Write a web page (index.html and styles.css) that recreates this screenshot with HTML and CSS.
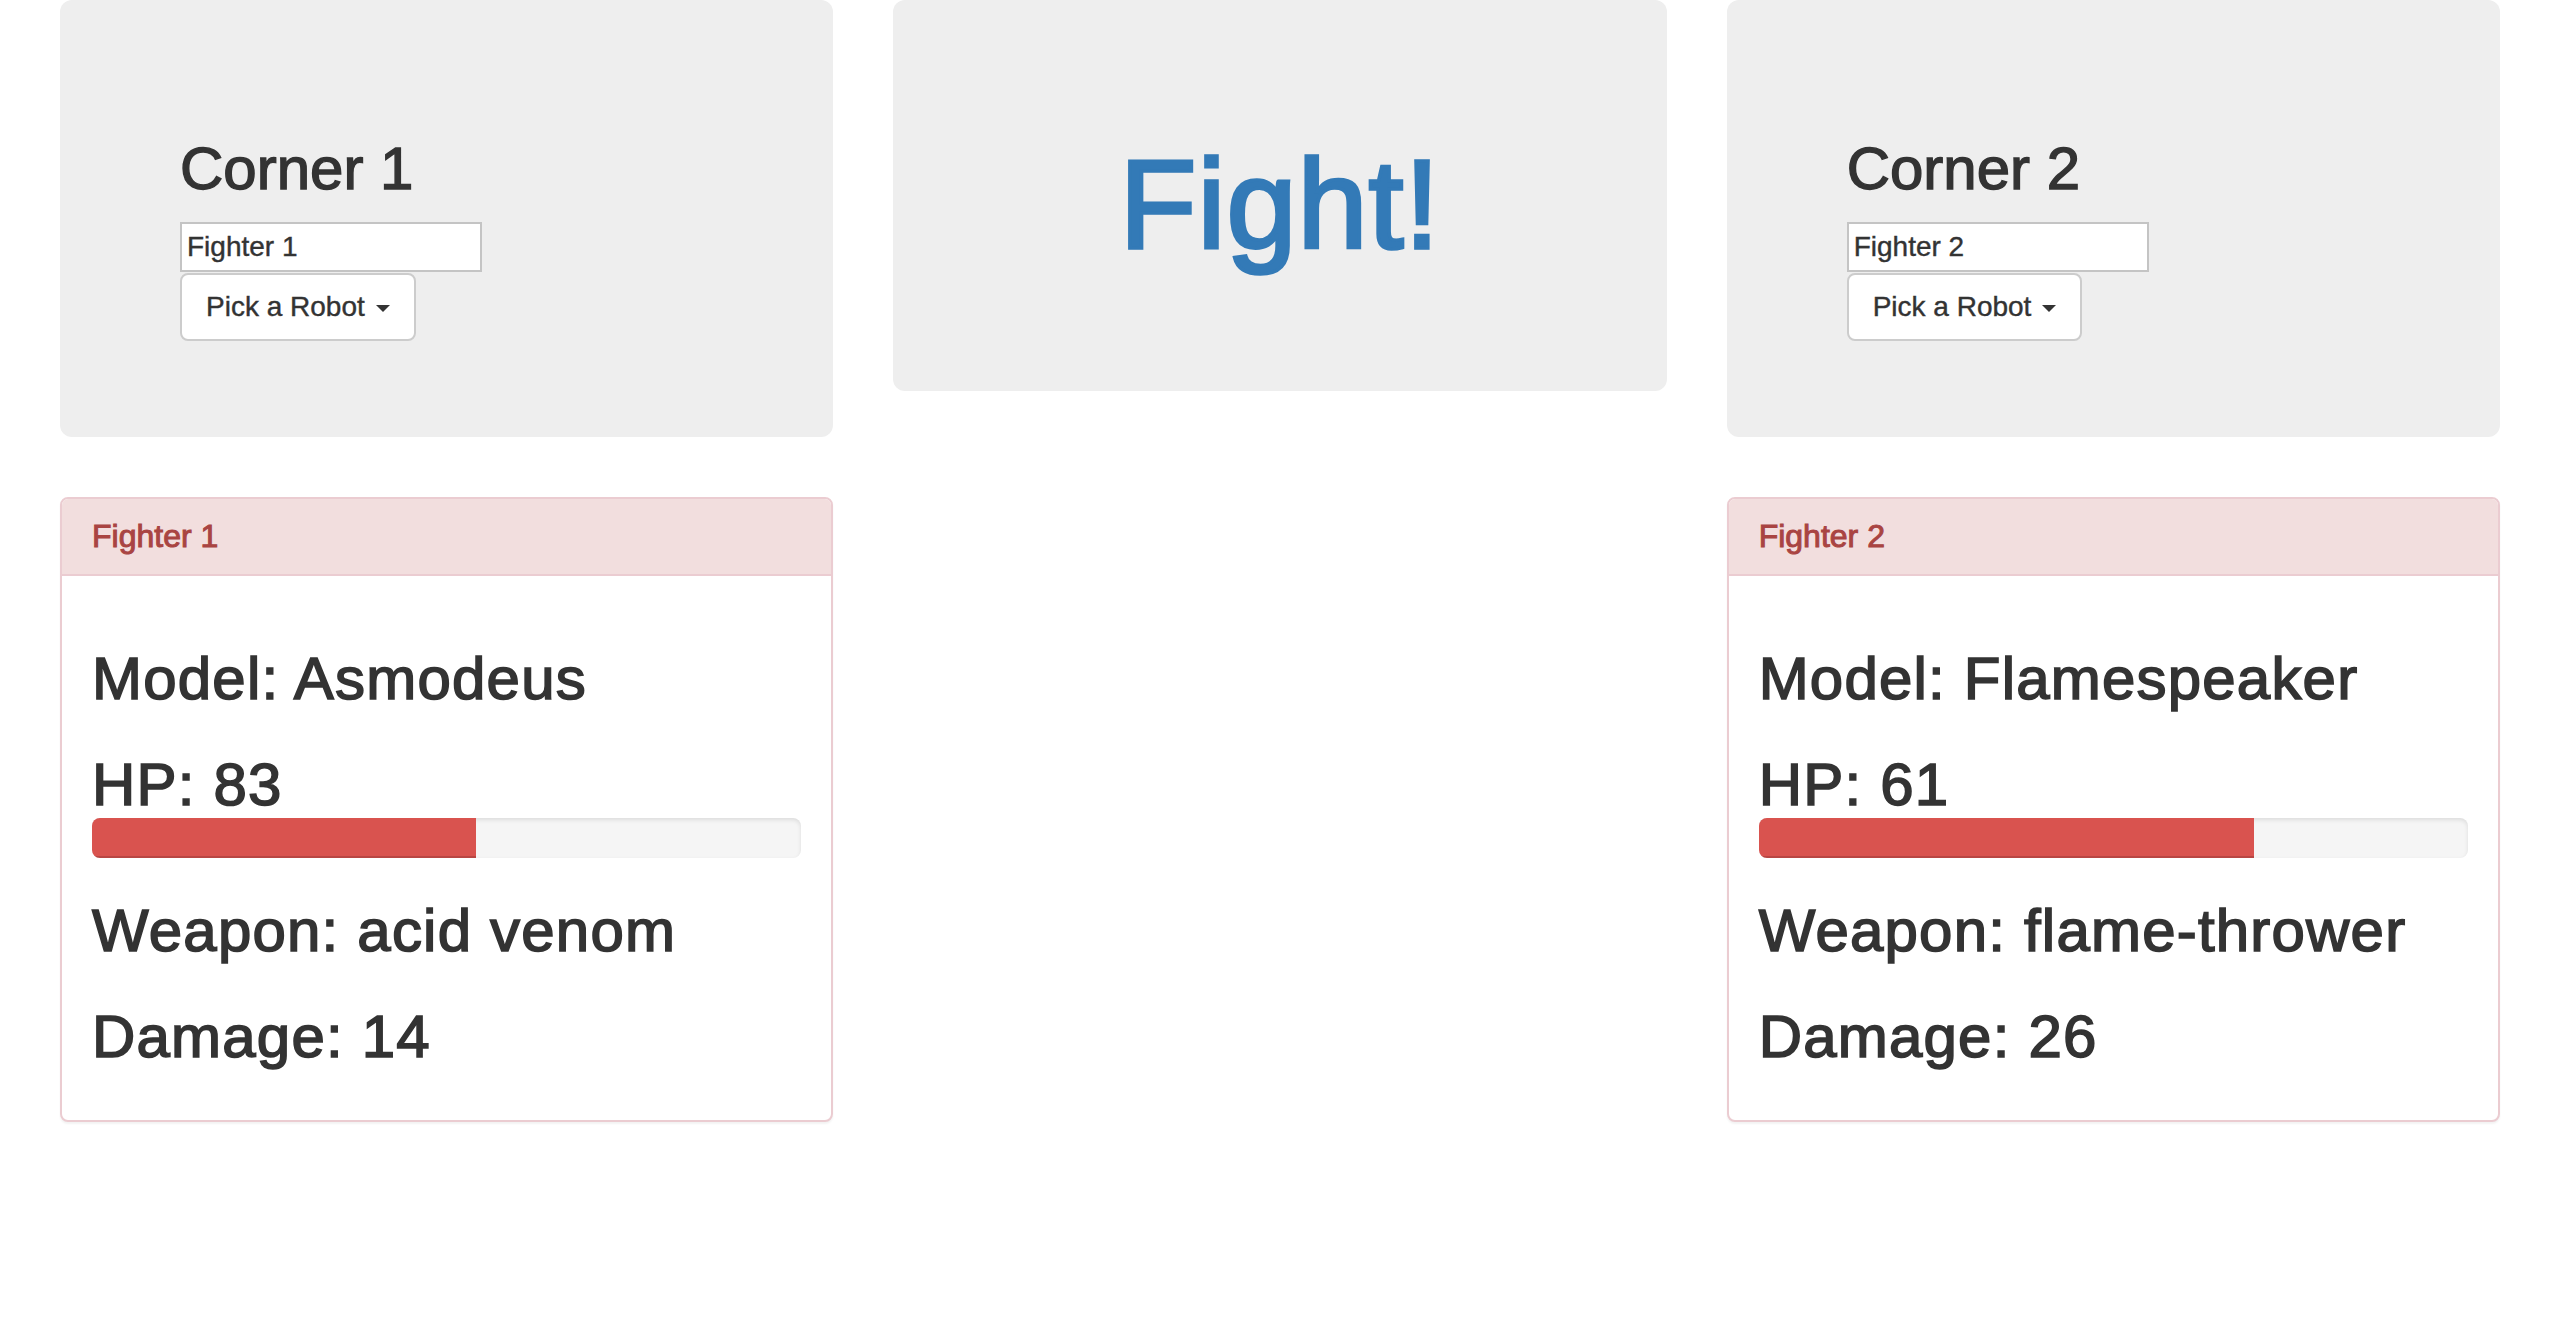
FILE: index.html
```html
<!DOCTYPE html>
<html lang="en">
<head>
<meta charset="utf-8">
<title>Robot Fight</title>
<link rel="stylesheet" href="styles.css">
</head>
<body>
<div class="page">
  <div class="col">
    <div class="jumbotron corner">
      <h2 class="corner-title">Corner 1</h2>
      <input class="name-input" type="text" value="Fighter 1">
      <div class="dropdown">
        <button class="btn" type="button">Pick a Robot <span class="caret"></span></button>
      </div>
    </div>
    <div class="panel">
      <div class="panel-heading"><h3 class="panel-title">Fighter 1</h3></div>
      <div class="panel-body">
        <h2 class="stat">Model: Asmodeus</h2>
        <h2 class="stat hp">HP: 83</h2>
        <div class="progress"><div class="bar" style="width:54.2%"></div></div>
        <h2 class="stat">Weapon: acid venom</h2>
        <h2 class="stat">Damage: 14</h2>
      </div>
    </div>
  </div>

  <div class="col">
    <div class="jumbotron fight">
      <h1 class="fight-title">Fight!</h1>
    </div>
  </div>

  <div class="col">
    <div class="jumbotron corner">
      <h2 class="corner-title">Corner 2</h2>
      <input class="name-input" type="text" value="Fighter 2">
      <div class="dropdown">
        <button class="btn" type="button">Pick a Robot <span class="caret"></span></button>
      </div>
    </div>
    <div class="panel">
      <div class="panel-heading"><h3 class="panel-title">Fighter 2</h3></div>
      <div class="panel-body">
        <h2 class="stat">Model: Flamespeaker</h2>
        <h2 class="stat hp">HP: 61</h2>
        <div class="progress"><div class="bar" style="width:69.8%"></div></div>
        <h2 class="stat">Weapon: flame-thrower</h2>
        <h2 class="stat">Damage: 26</h2>
      </div>
    </div>
  </div>
</div>
</body>
</html>
```

FILE: styles.css
```css
html, body {
  margin: 0;
  padding: 0;
  background: #fff;
}

body {
  font-family: "Liberation Sans", Arial, Helvetica, sans-serif;
  font-size: 28px;
  line-height: 40px;
  color: #333;
}

.page {
  display: grid;
  grid-template-columns: repeat(3, 1fr);
  column-gap: 60px;
  padding: 0 60px;
  align-items: start;
}

.jumbotron {
  background: #eee;
  border-radius: 12px;
  padding: 96px 120px;
  margin-bottom: 60px;
}

.corner-title {
  margin: 40px 0 20px;
  font-size: 60px;
  line-height: 66px;
  font-weight: 500;
  -webkit-text-stroke: 1.4px #333;
}

.name-input {
  display: block;
  box-sizing: border-box;
  width: 302px;
  height: 50px;
  margin: 0 0 1px;
  padding: 0 5px;
  border: 2px solid #c4c4c4;
  background: #fff;
  font-family: "Liberation Sans", Arial, sans-serif;
  font-size: 28px;
  color: #333;
  -webkit-text-stroke: 0.4px #333;
}

.btn {
  box-sizing: border-box;
  height: 68px;
  padding: 0 24px;
  border: 2px solid #ccc;
  border-radius: 8px;
  background: #fff;
  font-family: "Liberation Sans", Arial, sans-serif;
  font-size: 28px;
  line-height: 40px;
  color: #333;
  -webkit-text-stroke: 0.4px #333;
}

.caret {
  display: inline-block;
  width: 0;
  height: 0;
  margin-left: 3px;
  vertical-align: middle;
  border-top: 7px solid #333;
  border-left: 7px solid transparent;
  border-right: 7px solid transparent;
}

.fight {
  text-align: center;
}

.fight-title {
  margin: 40px 0 20px;
  font-size: 126px;
  line-height: 138.6px;
  font-weight: 500;
  letter-spacing: 1px;
  color: #337ab7;
  -webkit-text-stroke: 3.5px #337ab7;
}

.panel {
  background: #fff;
  border: 2px solid #ebccd1;
  border-radius: 8px;
  box-shadow: 0 2px 2px rgba(0, 0, 0, 0.05);
  margin-bottom: 40px;
}

.panel-heading {
  background: #f2dede;
  color: #a94442;
  padding: 20px 30px;
  border-bottom: 2px solid #ebccd1;
  border-radius: 6px 6px 0 0;
}

.panel-title {
  margin: 0;
  font-size: 32px;
  line-height: 35.2px;
  font-weight: 500;
  -webkit-text-stroke: 1px #a94442;
}

.panel-body {
  padding: 30px;
}

.stat {
  margin: 40px 0 20px;
  font-size: 60px;
  line-height: 66px;
  font-weight: 500;
  letter-spacing: 1.2px;
  -webkit-text-stroke: 1.6px #333;
}

.stat.hp {
  margin-bottom: 0;
}

.progress {
  height: 40px;
  margin-bottom: 40px;
  background: #f5f5f5;
  border-radius: 8px;
  box-shadow: inset 0 2px 4px rgba(0, 0, 0, 0.1);
  overflow: hidden;
}

.bar {
  height: 100%;
  background: #d9534f;
  box-shadow: inset 0 -2px 0 rgba(0, 0, 0, 0.15);
}
```
